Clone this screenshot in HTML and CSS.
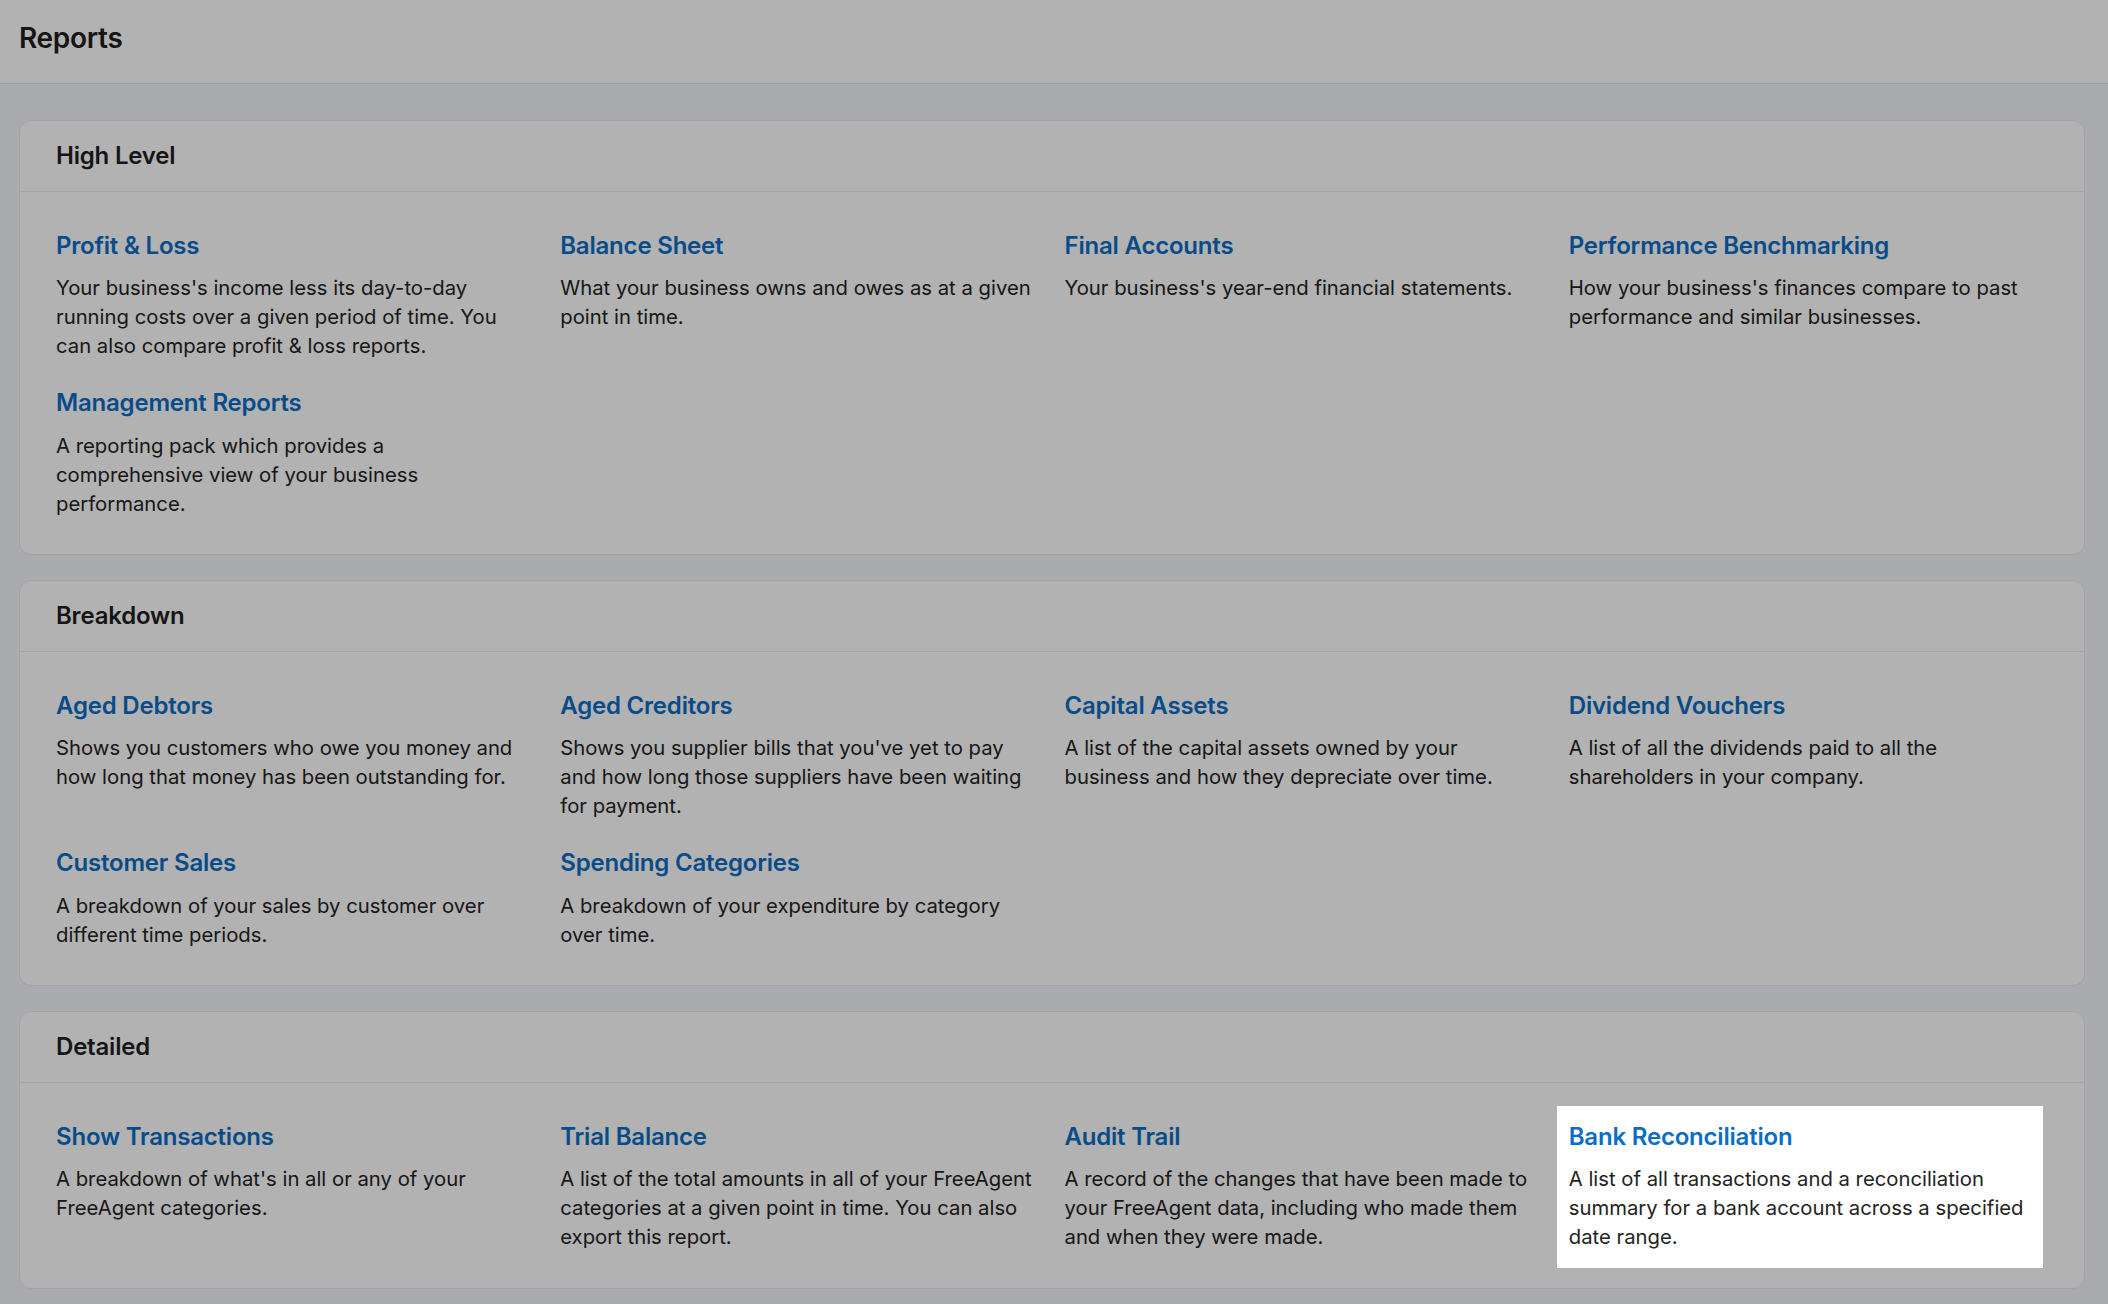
FILE: index.html
```html
<!DOCTYPE html>
<html lang="en">
<head>
    <meta charset="UTF-8">
    <title>Reports</title>
    <link rel="stylesheet" href="styles.css">
</head>
<body>
<header class="page-header">
    <h1 class="page-title">Reports</h1>
</header>

<main class="page-content">
    <section class="report-group">
        <h2 class="report-group-title">High Level</h2>
        <div class="report-grid">
            <div class="report">
                <a class="report-link" href="#">Profit &amp; Loss</a>
                <p class="report-desc">Your business's income less its day-to-day running costs over a given period of time. You can also compare profit &amp; loss reports.</p>
            </div>
            <div class="report">
                <a class="report-link" href="#">Balance Sheet</a>
                <p class="report-desc">What your business owns and owes as at a given point in time.</p>
            </div>
            <div class="report">
                <a class="report-link" href="#">Final Accounts</a>
                <p class="report-desc">Your business's year-end financial statements.</p>
            </div>
            <div class="report">
                <a class="report-link" href="#">Performance Benchmarking</a>
                <p class="report-desc">How your business's finances compare to past performance and similar businesses.</p>
            </div>
            <div class="report">
                <a class="report-link" href="#">Management Reports</a>
                <p class="report-desc">A reporting pack which provides a comprehensive view of your business performance.</p>
            </div>
        </div>
    </section>

    <section class="report-group">
        <h2 class="report-group-title">Breakdown</h2>
        <div class="report-grid">
            <div class="report">
                <a class="report-link" href="#">Aged Debtors</a>
                <p class="report-desc">Shows you customers who owe you money and how long that money has been outstanding for.</p>
            </div>
            <div class="report">
                <a class="report-link" href="#">Aged Creditors</a>
                <p class="report-desc">Shows you supplier bills that you've yet to pay and how long those suppliers have been waiting for payment.</p>
            </div>
            <div class="report">
                <a class="report-link" href="#">Capital Assets</a>
                <p class="report-desc">A list of the capital assets owned by your business and how they depreciate over time.</p>
            </div>
            <div class="report">
                <a class="report-link" href="#">Dividend Vouchers</a>
                <p class="report-desc">A list of all the dividends paid to all the shareholders in your company.</p>
            </div>
            <div class="report">
                <a class="report-link" href="#">Customer Sales</a>
                <p class="report-desc">A breakdown of your sales by customer over different time periods.</p>
            </div>
            <div class="report">
                <a class="report-link" href="#">Spending Categories</a>
                <p class="report-desc">A breakdown of your expenditure by category over time.</p>
            </div>
        </div>
    </section>

    <section class="report-group">
        <h2 class="report-group-title">Detailed</h2>
        <div class="report-grid">
            <div class="report">
                <a class="report-link" href="#">Show Transactions</a>
                <p class="report-desc">A breakdown of what's in all or any of your FreeAgent categories.</p>
            </div>
            <div class="report">
                <a class="report-link" href="#">Trial Balance</a>
                <p class="report-desc">A list of the total amounts in all of your FreeAgent categories at a given point in time. You can also export this report.</p>
            </div>
            <div class="report">
                <a class="report-link" href="#">Audit Trail</a>
                <p class="report-desc">A record of the changes that have been made to your FreeAgent data, including who made them and when they were made.</p>
            </div>
            <div class="report report-spotlight">
                <a class="report-link" href="#">Bank Reconciliation</a>
                <p class="report-desc">A list of all transactions and a reconciliation summary for a bank account across a specified date range.</p>
            </div>
        </div>
    </section>
</main>
</body>
</html>
```

FILE: styles.css
```css
html {
    background: #f2f5fa;
}

body {
    margin: 0;
    min-height: 1304px;
    color: #222;
    font-family: Inter, "Liberation Sans", sans-serif;
}

.page-header {
    height: 83px;
    padding: 0 19px;
    background: #fff;
    border-bottom: 1px solid #e4e7ec;
}

.page-title {
    margin: 0;
    padding-top: 20px;
    font-size: 28px;
    line-height: 36px;
    font-weight: 600;
    letter-spacing: -0.3px;
    color: #1f1f1f;
}

.page-content {
    padding: 36px 23px 16px 19px;

    display: flex;
    flex-direction: column;
    gap: 25px;
}

.report-group {
    background: #fff;
    border: 1px solid #e8e8e8;
    border-radius: 12px;
}

.report-group-title {
    margin: 0;
    padding: 19px 36px 19px;
    font-size: 24px;
    line-height: 32px;
    font-weight: 600;
    letter-spacing: -0.2px;
    color: #1f1f1f;
    border-bottom: 1px solid #ececec;
}

.report-grid {
    padding: 38.5px 36px 36.5px;

    display: grid;
    grid-template-columns: repeat(4, 1fr);
    column-gap: 25px;
    row-gap: 28px;
}

.report {
    display: flex;
    flex-direction: column;
    gap: 12.5px;
}

.report-link {
    font-size: 24px;
    line-height: 30px;
    font-weight: 600;
    letter-spacing: -0.2px;
    color: #0b6dc4;
    text-decoration: none;
}

.report-desc {
    margin: 0;
    font-size: 20.3px;
    line-height: 29px;
    color: #232323;
}

/* onboarding tour: everything but this item is dimmed */
.report-spotlight {
    position: relative;
    z-index: 10;
    margin: -16px 5px -17px -12px;
    padding: 16px 0 17px 12px;
    background: #fff;
    box-shadow: 0 0 0 4000px rgba(0, 0, 0, 0.3);
}
```
